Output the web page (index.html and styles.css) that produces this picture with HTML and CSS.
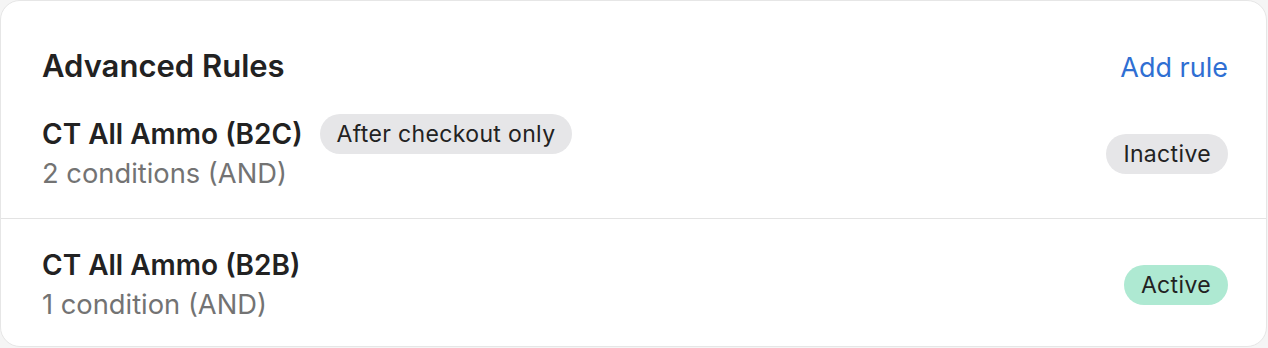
FILE: index.html
```html
<!DOCTYPE html>
<html lang="en">
<head>
  <meta charset="UTF-8" />
  <meta name="viewport" content="width=device-width, initial-scale=1.0" />
  <title>Advanced Rules</title>
  <link rel="stylesheet" href="styles.css">
</head>
<body>
  <div class="rules-card">
    <div class="rules-header">
      <h2>Advanced Rules</h2>
      <a href="#" class="add-rule">Add rule</a>
    </div>

    <div class="rule-row">
      <div class="rule-info">
        <div class="rule-title">
          <span class="rule-name">CT All Ammo (B2C)</span>
          <span class="pill pill-muted">After checkout only</span>
        </div>
        <div class="rule-meta">2 conditions (AND)</div>
      </div>
      <span class="pill pill-muted">Inactive</span>
    </div>

    <div class="rule-row">
      <div class="rule-info">
        <div class="rule-title">
          <span class="rule-name">CT All Ammo (B2B)</span>
        </div>
        <div class="rule-meta">1 condition (AND)</div>
      </div>
      <span class="pill pill-active">Active</span>
    </div>
  </div>
</body>
</html>
```

FILE: styles.css
```css
body {
  margin: 0;
  font-family: Inter, "Liberation Sans", sans-serif;
  background-color: #f5f5f5;
  color: #222;
}

.rules-card {
  box-sizing: border-box;
  width: 1267px;
  height: 347px;
  background-color: #fff;
  border: 1px solid #e6e6e6;
  border-radius: 20px;
  padding-top: 48px;
  overflow: hidden;
}

.rules-header {
  display: flex;
  justify-content: space-between;
  align-items: baseline;
  padding: 0 38px 6px 41px;
}

.rules-header h2 {
  margin: 0;
  font-size: 31px;
  line-height: 34px;
  font-weight: 600;
  color: #222;
}

.add-rule {
  font-size: 27px;
  color: #2f6fd3;
  text-decoration: none;
}

.rule-row {
  display: flex;
  justify-content: space-between;
  align-items: center;
  padding: 24px 38px 24px 41px;
}

.rule-row + .rule-row {
  border-top: 1px solid #e3e3e3;
  padding-top: 26px;
}

.rule-title {
  display: flex;
  align-items: center;
  gap: 17px;
  height: 40px;
}

.rule-name {
  font-size: 28px;
  font-weight: 600;
  color: #222;
}

.rule-meta {
  font-size: 27.3px;
  line-height: 40px;
  color: #737373;
}

.pill {
  display: inline-flex;
  align-items: center;
  height: 40px;
  padding: 0 17px;
  border-radius: 20px;
  font-size: 23px;
  letter-spacing: 0.35px;
  color: #222;
}

.pill-muted {
  background-color: #e6e6e8;
}

.pill-active {
  background-color: #aee9d2;
}
```
